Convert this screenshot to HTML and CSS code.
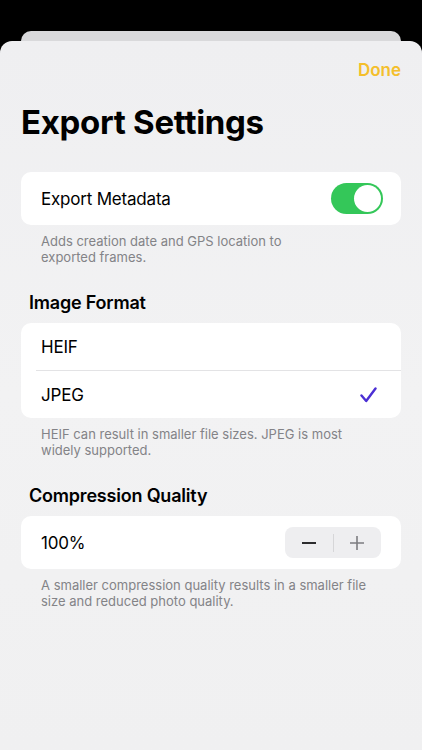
FILE: index.html
```html
<!DOCTYPE html>
<html lang="en">
<head>
    <meta charset="UTF-8">
    <meta name="viewport" content="width=device-width, initial-scale=1.0">
    <title>Export Settings</title>
    <link rel="stylesheet" href="styles.css">
</head>
<body>
    <div class="back-card"></div>
    <div class="sheet">
        <div class="nav">
            <button class="done-btn">Done</button>
        </div>

        <h1 class="title">Export Settings</h1>

        <div class="group">
            <div class="row row-tall">
                <div class="row-body">
                    <span>Export Metadata</span>
                    <div class="toggle"><div class="knob"></div></div>
                </div>
            </div>
        </div>
        <p class="footer">Adds creation date and GPS location to<br>exported frames.</p>

        <h2 class="section-title">Image Format</h2>
        <div class="group">
            <div class="row">
                <div class="row-body">
                    <span>HEIF</span>
                </div>
            </div>
            <div class="row">
                <div class="row-body">
                    <span>JPEG</span>
                    <svg class="check" width="17" height="16" viewBox="0 0 17 16">
                        <path d="M1.5 8.5 L6.2 14 L15.5 1.5" fill="none" stroke="#4b2fd4" stroke-width="2.4" stroke-linecap="round" stroke-linejoin="round"/>
                    </svg>
                </div>
            </div>
        </div>
        <p class="footer">HEIF can result in smaller file sizes. JPEG is most<br>widely supported.</p>

        <h2 class="section-title">Compression Quality</h2>
        <div class="group">
            <div class="row row-tall">
                <div class="row-body">
                    <span>100%</span>
                    <div class="stepper">
                        <button class="step-btn">
                            <svg width="16" height="16" viewBox="0 0 16 16"><path d="M1 8 H15" stroke="#2c2c2e" stroke-width="2.2"/></svg>
                        </button>
                        <span class="step-divider"></span>
                        <button class="step-btn">
                            <svg width="16" height="16" viewBox="0 0 16 16"><path d="M1 8 H15 M8 1 V15" stroke="#7c7c80" stroke-width="1.6"/></svg>
                        </button>
                    </div>
                </div>
            </div>
        </div>
        <p class="footer">A smaller compression quality results in a smaller file<br>size and reduced photo quality.</p>
    </div>
</body>
</html>
```

FILE: styles.css
```css
body {
    margin: 0;
    padding-top: 31px;
    background-color: #000;
    font-family: Inter, "Noto Sans", sans-serif;
    color: #000;
    overflow: hidden;
}
.back-card {
    height: 10px;
    margin: 0 21px;
    background-color: #d9d9db;
    border-radius: 10px 10px 0 0;
}
.sheet {
    min-height: 709px;
    padding: 18px 21px 0;
    box-sizing: border-box;
    background: linear-gradient(180deg, #efeff1 0%, #f2f2f3 50%, #f0f0f1 100%);
    border-radius: 12px 12px 0 0;
}
.nav {
    display: flex;
    justify-content: flex-end;
}
.done-btn {
    padding: 0;
    border: none;
    background: none;
    font-family: inherit;
    font-size: 17px;
    font-weight: 600;
    line-height: 22px;
    color: #f4bf2c;
}
.title {
    margin: 21px 0 30px;
    font-size: 33px;
    font-weight: 700;
    line-height: 40px;
    letter-spacing: -0.3px;
}
.group {
    background-color: #fff;
    border-radius: 10px;
    overflow: hidden;
}
.row {
    padding-left: 15px;
    font-size: 17px;
    letter-spacing: -0.2px;
}
.row-body {
    display: flex;
    align-items: center;
    justify-content: space-between;
    min-height: 47px;
    padding: 0 18px 0 5px;
}
.row + .row .row-body {
    border-top: 1px solid #e3e3e5;
}
.row-tall .row-body {
    min-height: 53px;
}
.footer {
    margin: 8px 0 26px;
    padding-left: 20px;
    font-size: 13px;
    line-height: 16px;
    color: #838387;
}
.section-title {
    margin: 0 0 8px;
    padding-left: 8px;
    font-size: 18px;
    font-weight: 600;
    line-height: 24px;
    letter-spacing: -0.2px;
}
.toggle {
    display: flex;
    justify-content: flex-end;
    width: 52px;
    height: 31px;
    padding: 2px;
    box-sizing: border-box;
    background-color: #34c759;
    border-radius: 16px;
}
.knob {
    width: 27px;
    height: 27px;
    background-color: #fff;
    border-radius: 50%;
}
.check {
    margin-right: 6px;
}
.stepper {
    display: flex;
    align-items: center;
    width: 96px;
    height: 31px;
    margin-right: 2px;
    background-color: #eeeef0;
    border-radius: 8px;
}
.step-btn {
    display: flex;
    align-items: center;
    justify-content: center;
    flex: 1;
    height: 100%;
    padding: 0;
    border: none;
    background: none;
}
.step-divider {
    width: 1px;
    height: 18px;
    background-color: #d6d6d8;
}
```
